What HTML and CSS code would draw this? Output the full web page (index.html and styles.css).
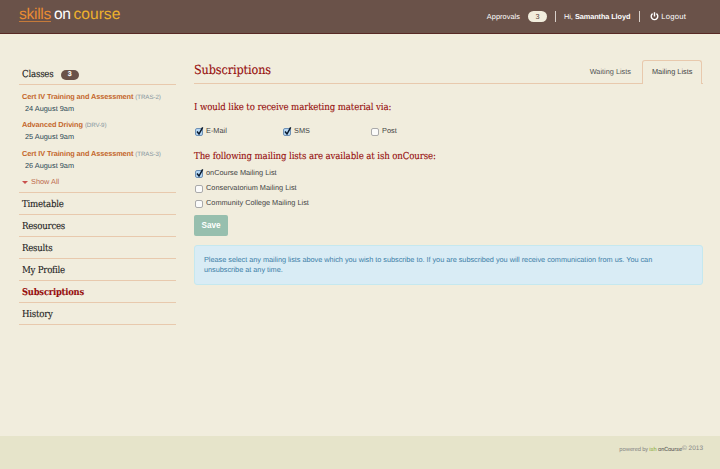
FILE: index.html
```html
<!DOCTYPE html>
<html lang="en">
<head>
<meta charset="utf-8">
<title>Subscriptions</title>
<link rel="stylesheet" href="styles.css">
</head>
<body>
<header class="topbar">
  <a class="logo"><span class="logo-skills">skills</span><span class="logo-on">on</span><span class="logo-course">course</span></a>
  <div class="account">
    <span class="approvals">Approvals</span><span class="pill">3</span>
    <span class="user">Hi, <b>Samantha Lloyd</b></span>
    <span class="logout"><svg viewBox="0 0 9 9" width="9" height="9"><path d="M2.6 1.6A3.3 3.3 0 1 0 6.4 1.6M4.5 .3V4.4" fill="none" stroke="#fff" stroke-width="1.4"/></svg>Logout</span>
  </div>
</header>
<div class="page">
  <aside class="sidebar">
    <h3 class="classes-title">Classes<span class="count">3</span></h3>
    <ul class="classes">
      <li><a>Cert IV Training and Assessment</a> <small>(TRAS-2)</small><time>24 August 9am</time></li>
      <li><a>Advanced Driving</a> <small>(DRV-9)</small><time>25 August 9am</time></li>
      <li><a>Cert IV Training and Assessment</a> <small>(TRAS-3)</small><time>26 August 9am</time></li>
    </ul>
    <div class="show-all"><i class="caret"></i>Show All</div>
    <nav class="menu">
      <a>Timetable</a><a>Resources</a><a>Results</a><a>My Profile</a><a class="active">Subscriptions</a><a>History</a>
    </nav>
  </aside>
  <main class="content">
    <div class="heading">
      <h1>Subscriptions</h1>
      <div class="tabs"><a class="tab">Waiting Lists</a><a class="tab current">Mailing Lists</a></div>
    </div>
    <h2 class="first">I would like to receive marketing material via:</h2>
    <div class="channels">
      <label><span class="box on"><svg viewBox="0 0 9 10"><path d="M2 5.5L4 8L7.7 1.3"/></svg></span>E-Mail</label>
      <label><span class="box on"><svg viewBox="0 0 9 10"><path d="M2 5.5L4 8L7.7 1.3"/></svg></span>SMS</label>
      <label><span class="box"></span>Post</label>
    </div>
    <h2 class="second">The following mailing lists are available at ish onCourse:</h2>
    <div class="lists">
      <label><span class="box on"><svg viewBox="0 0 9 10"><path d="M2 5.5L4 8L7.7 1.3"/></svg></span>onCourse Mailing List</label>
      <label><span class="box"></span>Conservatorium Mailing List</label>
      <label><span class="box"></span>Community College Mailing List</label>
    </div>
    <button class="save">Save</button>
    <p class="notice">Please select any mailing lists above which you wish to subscribe to. If you are subscribed you will receive communication from us. You can unsubscribe at any time.</p>
  </main>
</div>
<footer class="footer"><span class="powered">powered by <span class="ish">ish</span> <span class="oncourse">onCourse</span></span><span class="copy">© 2013</span></footer>
</body>
</html>
```
FILE: styles.css
```css
* { box-sizing: border-box; }
body {
  margin: 0;
  height: 469px;
  display: flex;
  flex-direction: column;
  overflow: hidden;
  background: #f1eddd;
  color: #444;
  font: 7.35px/10px "Liberation Sans", Arial, sans-serif;
  text-rendering: geometricPrecision;
}
h1, h2, h3, ul, p { margin: 0; padding: 0; }
h1, h2, h3, .menu { font-family: "DejaVu Serif Condensed", "DejaVu Serif", serif; font-stretch: condensed; font-weight: normal; -webkit-text-stroke: .1px currentColor; }

.topbar {
  flex: none;
  height: 34px;
  display: flex;
  justify-content: space-between;
  background: #6a5249;
  border-bottom: 1px solid #582a25;
  padding: 0 34px 0 19px;
  color: #fff;
}
.logo { display: flex; font-size: 15.6px; line-height: 17px; padding-top: 6px; }
.logo-skills { color: #e98b33; height: 16px; border-bottom: 1px solid #c57a3a; letter-spacing: -.3px; }
.logo-on { margin-left: 3px; letter-spacing: -.4px; }
.logo-course { margin-left: 3px; color: #eeb02d; }
.account { display: flex; align-items: flex-start; padding-top: 11px; line-height: 11px; }
.approvals { letter-spacing: .05px; }
.pill {
  width: 19px;
  height: 11px;
  margin-left: 8px;
  border-radius: 6px;
  background: #f1eddd;
  color: #554138;
  text-align: center;
}
.user, .logout { border-left: 1px solid #d8d0ca; }
.user { margin-left: 8px; padding-left: 8px; }
.user b { letter-spacing: -.1px; }
.logout { display: flex; align-items: center; margin-left: 9px; padding-left: 10px; font-size: 7.7px; letter-spacing: .2px; }
.logout svg { margin-right: 2px; }

.page { flex: 1; display: flex; padding: 0 17px 0 19px; }
.sidebar { width: 157px; margin-right: 18px; }
.classes-title {
  height: 51px;
  padding: 35px 0 0 3px;
  border-bottom: 1px solid #e8c9ad;
  display: flex;
  color: #222;
  font-size: 9.6px;
  letter-spacing: -.2px;
  line-height: 12px;
}
.count {
  width: 18px;
  height: 10px;
  margin: 1px 0 0 7px;
  border-radius: 5px;
  background: #6a5249;
  color: #fff;
  font: bold 7px/10px "Liberation Sans", Arial, sans-serif;
  text-align: center;
}
.classes { list-style: none; padding: 6px 0 0 3px; }
.classes li { height: 28.3px; line-height: 11px; white-space: nowrap; }
.classes a { color: #c4662b; font-weight: bold; letter-spacing: -.1px; }
.classes small { color: #8796a0; font-size: 6.2px; letter-spacing: -.1px; }
.classes time { display: block; margin-left: 3px; line-height: 12px; color: #294654; }
.show-all { display: flex; align-items: center; height: 11px; margin-top: 1px; padding-left: 3px; color: #bd6b4d; }
.caret { border: 3px solid transparent; border-top-color: #c9514d; border-bottom: 0; margin-right: 3px; }
.menu { margin-top: 4px; border-top: 1px solid #e8c9ad; font-size: 9.6px; letter-spacing: -.25px; }
.menu a { display: block; height: 22px; padding: 1px 0 0 3px; line-height: 22px; border-bottom: 1px solid #e8c9ad; color: #222; }
.menu .active { color: #960d0d; font-weight: bold; font-size: 9.3px; letter-spacing: -.2px; }

.content { width: 509px; }
.heading { height: 50px; border-bottom: 1px solid #e8c9ad; display: flex; justify-content: space-between; color: #960d0d; }
.heading h1 { padding-top: 27px; font-size: 12.5px; line-height: 18px; letter-spacing: -.1px; }
.tabs { display: flex; padding: 26px 1px 0 0; }
.tab { height: 23px; line-height: 22px; padding: 1px 11px 0; color: #555; }
.current { width: 60px; padding: 0 0 0 9px; border: 1px solid #e8c9ad; border-bottom: 0; border-radius: 3px 3px 0 0; background: #f1eddd; color: #444; height: 24px; }
h2 { color: #960d0d; font-size: 9.6px; line-height: 14px; letter-spacing: -.12px; white-space: nowrap; }
.first { margin-top: 17px; }
.channels { display: flex; height: 15px; margin-top: 11px; }
.channels label { width: 88px; }
label { display: flex; line-height: 10px; }
.box { width: 8px; height: 8px; margin: 2px 3px 0 1px; border: 1px solid #aaa; border-radius: 2px; background: #fbfbfa; }
.on { background: #b5d7f4; border-color: #6f91b5; }
.box svg { display: block; width: 9px; height: 10px; margin: -3px 0 0 -1px; }
.box path { fill: none; stroke: #07172b; stroke-width: 1.5; }
.second { margin-top: 9px; }
.lists { margin-top: 4px; }
.lists label { height: 15px; }
.save { display: block; width: 34px; height: 21px; margin-top: 2px; padding: 0; border: 0; border-radius: 2px; background: #97bfae; color: #fff; font: bold 8.2px/21px "Liberation Sans", Arial, sans-serif; }
.notice { height: 40px; margin-top: 9px; padding: 9px 40px 9px 9px; border: 1px solid #c5e8ef; border-radius: 3px; background: #d9ecf5; color: #3d80a8; letter-spacing: -.035px; }

.footer { flex: none; height: 33px; display: flex; justify-content: flex-end; padding: 8px 17px 0 0; background: #e6e4ca; color: #888; font-size: 6.5px; }
.powered { font-family: "Roboto", sans-serif; font-size: 5.8px; line-height: 12px; letter-spacing: -.1px; }
.ish { color: #8fae3c; }
.oncourse { color: #555; }
```
